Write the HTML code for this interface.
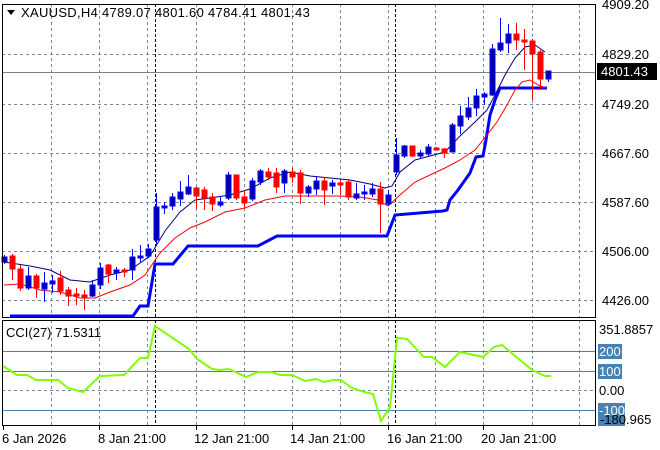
<!DOCTYPE html>
<html><head><meta charset="utf-8"><style>
html,body{margin:0;padding:0;background:#fff;width:660px;height:450px;overflow:hidden}
svg{display:block}
text{font-family:"Liberation Sans",sans-serif;font-size:13px;fill:#000}
</style></head><body>
<svg width="660" height="450" viewBox="0 0 660 450" xmlns="http://www.w3.org/2000/svg">
<rect width="660" height="450" fill="#fff"/>
<g stroke="#778899" stroke-width="1" stroke-dasharray="3,3" fill="none" shape-rendering="crispEdges">
<path d="M51.5 4V317M99.5 4V317M147.5 4V317M196.5 4V317M244.5 4V317M292.5 4V317M340.5 4V317M388.5 4V317M435.5 4V317M483.5 4V317M532.5 4V317M579.5 4V317"/>
<path d="M2 54.5H596M2 104.5H596M2 153.5H596M2 202.5H596M2 251.5H596M2 300.5H596"/>
<path d="M51.5 320V425M99.5 320V425M147.5 320V425M196.5 320V425M244.5 320V425M292.5 320V425M340.5 320V425M388.5 320V425M435.5 320V425M483.5 320V425M532.5 320V425M579.5 320V425"/>
<path d="M2 390.5H596"/>
</g>
<g stroke="#000" stroke-dasharray="3,2" shape-rendering="crispEdges"><path d="M155.5 4V317M395.5 4V317M155.5 320V425M395.5 320V425"/></g>
<path d="M2 72.5H596" stroke="#808080" shape-rendering="crispEdges"/>
<g stroke="#4682b4" shape-rendering="crispEdges"><path d="M2 351.5H596M2 371.5H596M2 410.5H596"/></g>
<polyline fill="none" stroke="#0000ff" stroke-width="3" points="10,316 133,316 140,306 148,306 155,264 173,264 188,246 258,246 277,236 387,236 395,215 443,211 447,210 450,200 458,190 470,173 476,157 483,156 486,140 490,115 495,100 500,88 547,88"/>
<polyline fill="none" stroke="#ff0000" stroke-width="1" points="4,285 20,284 40,290 60,292 80,298 95,298 110,292 130,285 145,275 160,253 175,238 190,228 205,222 225,212 245,208 265,200 285,196 300,196 320,196 340,196 360,197 378,200 388,206 400,195 415,182 430,175 445,168 460,160 475,150 487,135 497,122 507,105 515,90 522,82 530,80 540,86 547,88"/>
<polyline fill="none" stroke="#000080" stroke-width="1" points="4,262 30,266 50,270 70,280 90,282 110,275 130,270 150,256 165,231 180,212 195,200 210,198 230,195 250,189 270,178 290,172 310,176 330,178 350,180 370,184 385,188 392,186 400,172 415,160 430,156 445,152 460,136 475,122 487,110 495,95 505,75 515,58 525,47 535,45 545,52"/>
<g id="c" shape-rendering="crispEdges"></g>
<rect x="2.5" y="4.5" width="593" height="313" fill="none" stroke="#000"/>
<rect x="2.5" y="320.5" width="593" height="105" fill="none" stroke="#000"/>
<polyline fill="none" stroke="#7fff00" stroke-width="2" points="3,366 17,375 27,375 36,380 58,380 68,388 83,392 100,376 124,375 140,358 148,358 155,326 189,349 197,359 212,369 220,370 229,369 246,377 258,372 271,372 280,375 292,375 305,381 316,379 324,382 333,380 341,380 352,388 364,392 373,394 381,421 390,407 397,338 407,339 424,357 432,357 445,367 460,352 483,357 494,347 502,345 532,370 545,376 551,376"/>
<path d="M7 10h8l-4 5z" fill="#000"/>
<text x="21" y="17" style="letter-spacing:0.3px">XAUUSD,H4  4789.07 4801.60 4784.41 4801.43</text>
<text x="6" y="337">CCI(27) 71.5311</text>
<g>
<text x="602" y="9">4909.20</text>
<text x="602" y="59">4829.20</text>
<rect x="597" y="63" width="60" height="17" fill="#000"/>
<text x="601" y="76" style="fill:#fff">4801.43</text>
<text x="602" y="109">4749.20</text>
<text x="602" y="158">4667.60</text>
<text x="602" y="207">4587.60</text>
<text x="602" y="256">4506.00</text>
<text x="602" y="305">4426.00</text>
<text x="599" y="334">351.8857</text>
<rect x="598" y="344" width="24" height="15" fill="#4682b4"/><text x="599" y="356" style="fill:#fff">200</text>
<rect x="598" y="364" width="24" height="15" fill="#4682b4"/><text x="599" y="376" style="fill:#fff">100</text>
<text x="599" y="395">0.00</text>
<rect x="598" y="403" width="27" height="23" fill="#4682b4"/><text x="599" y="415" style="fill:#fff">-100</text>
<text x="600" y="424">-180.965</text>
</g>
<g stroke="#000" shape-rendering="crispEdges"><path d="M3.5 425V430M99.5 425V430M196.5 425V430M292.5 425V430M388.5 425V430M483.5 425V430"/></g>
<text x="2" y="443">6 Jan 2026</text>
<text x="98" y="443">8 Jan 21:00</text>
<text x="194" y="443">12 Jan 21:00</text>
<text x="290" y="443">14 Jan 21:00</text>
<text x="387" y="443">16 Jan 21:00</text>
<text x="481" y="443">20 Jan 21:00</text>
</svg>
<script>
var d=[
[1,257,262,255,264],[0,256,269,254,280],[0,269,288,265,291],[1,276,288,267,290],[0,276,288,274,298],[1,283,289,272,302],[1,281,284,275,293],[0,278,291,271,295],[0,290,296,287,306],[0,294,296,288,305],[0,295,297,290,310],[1,285,296,280,297],[1,268,285,263,289],[0,265,274,264,283],[1,270,273,267,280],[0,270,272,268,277],[1,257,270,249,280],[1,256,258,245,262],[1,249,256,244,258],[1,207,240,193,244],[1,206,208,202,214],[1,197,206,193,210],[1,192,199,181,206],[1,187,194,175,195],[0,188,196,187,209],[0,190,198,187,210],[0,197,204,193,211],[1,202,205,197,207],[1,175,198,172,200],[0,175,198,175,200],[0,197,203,190,208],[1,181,199,178,201],[1,171,182,169,185],[0,172,177,168,180],[0,173,187,168,193],[1,171,183,169,193],[0,172,177,168,183],[0,173,193,170,204],[1,187,193,185,197],[1,181,189,177,195],[0,181,190,177,205],[1,183,186,180,194],[0,183,185,180,195],[0,182,197,180,200],[1,194,198,183,200],[1,192,194,185,200],[1,189,194,183,197],[0,189,204,182,233],[1,195,204,190,206],[1,155,172,138,175],[1,146,156,145,158],[0,146,156,146,157],[1,153,156,150,158],[1,147,154,144,157],[0,148,150,147,150],[0,149,153,148,158],[1,125,152,123,152],[1,116,126,106,134],[1,108,117,97,120],[1,96,108,89,116],[1,94,97,92,105],[1,49,95,44,96],[1,43,50,18,52],[1,34,43,24,53],[0,34,40,23,50],[0,40,42,29,70],[0,41,54,39,100],[0,52,79,50,90],[1,71,79,71,82]];
var g=document.getElementById('c'),s='';
for(var i=0;i<d.length;i++){var c=d[i],x=4+8*i,col=c[0]?'#0000a0':'#ff0000',wc=c[0]?'#0000ff':'#ff0000';
s+='<line x1="'+(x+.5)+'" x2="'+(x+.5)+'" y1="'+c[3]+'" y2="'+c[4]+'" stroke="'+wc+'"/>';
var h=Math.max(2,c[2]-c[1]);
s+='<rect x="'+(x-2)+'" y="'+c[1]+'" width="5" height="'+h+'" fill="'+col+'" stroke="'+wc+'" stroke-width="0.6"/>';}
g.innerHTML=s;
</script>
</body></html>
